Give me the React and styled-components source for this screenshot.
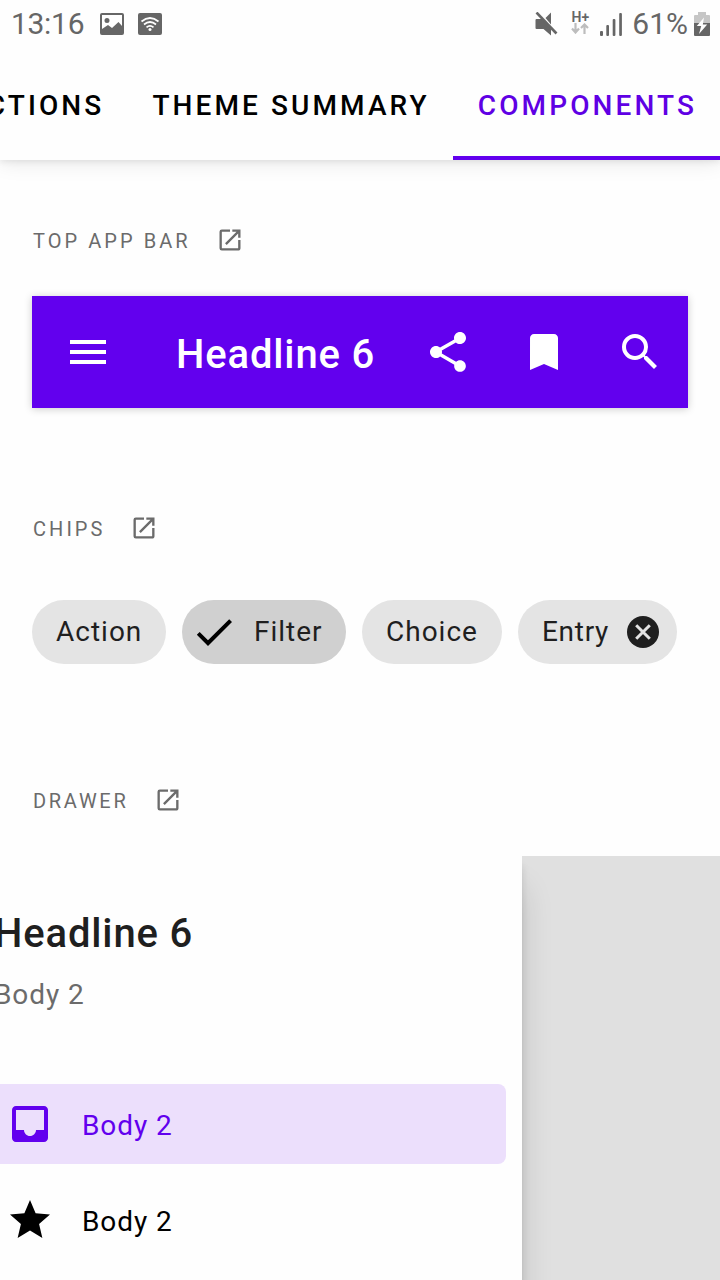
import React from "react";
import styled, { createGlobalStyle } from "styled-components";

const GlobalStyle = createGlobalStyle`
  *, *::before, *::after { box-sizing: border-box; }
  body { margin: 0; background: #fefefe; font-family: Roboto, sans-serif; }
`;

const Screen = styled.div`
  width: 720px;
  height: 1280px;
  overflow: hidden;
  display: flex;
  flex-direction: column;
  background: #fefefe;
`;

const StatusBar = styled.header`
  height: 48px;
  flex: none;
  display: flex;
  align-items: center;
  justify-content: space-between;
  padding: 0 10px 0 11px;
  color: #666;
`;

const StatusGroup = styled.div`
  display: flex;
  align-items: center;
  gap: ${(p) => p.$gap}px;
`;

const StatusText = styled.span`
  font-size: 30px;
  line-height: 48px;
  letter-spacing: ${(p) => p.$spacing || 0}px;
`;

const Glyph = styled.svg`
  display: block;
  flex: none;
  fill: currentColor;
  width: ${(p) => p.$w}px;
  height: ${(p) => p.$h || p.$w}px;
`;

const TabBar = styled.nav`
  height: 112px;
  flex: none;
  display: flex;
  justify-content: flex-end;
  box-shadow: 0 2px 20px rgba(0, 0, 0, 0.1), 0 2px 6px rgba(0, 0, 0, 0.07);
  clip-path: inset(0 0 -30px 0);
`;

const Tab = styled.div`
  flex: none;
  padding: 38px 23px 0 25px;
  border-bottom: 4px solid ${(p) => (p.$active ? "#6200ee" : "transparent")};
  color: ${(p) => (p.$active ? "#5f00e4" : "#000")};
  font-size: 28px;
  line-height: 40px;
  font-weight: 500;
  letter-spacing: 3.1px;
  white-space: nowrap;
`;

const Section = styled.section`
  flex: none;
  padding: ${(p) => p.$top}px 32px 0;
`;

const SectionLabel = styled.h2`
  margin: 0 0 ${(p) => p.$after}px;
  height: 32px;
  display: flex;
  align-items: center;
  gap: ${(p) => p.$gap}px;
  padding-left: 1px;
  color: #6b6b6b;
  font-size: 20px;
  line-height: 32px;
  font-weight: 400;
  letter-spacing: ${(p) => p.$spacing}px;
  span { padding-top: 2px; }
`;

const AppBar = styled.div`
  height: 112px;
  display: flex;
  align-items: center;
  padding: 0 24px 0 32px;
  background: #6200ee;
  color: #fff;
  box-shadow: 0 1px 8px rgba(0, 0, 0, 0.2);
`;

const AppBarTitle = styled.div`
  flex: 1;
  padding: 6px 0 0 64px;
  font-size: 40px;
  line-height: 48px;
  font-weight: 500;
  letter-spacing: 0.85px;
  white-space: nowrap;
`;

const Actions = styled.div`
  display: flex;
  gap: 48px;
`;

const Chips = styled.div`
  display: flex;
  gap: 16px;
`;

const Chip = styled.div`
  height: 64px;
  flex: none;
  display: flex;
  align-items: center;
  justify-content: space-between;
  width: ${(p) => p.$w}px;
  padding: 0 ${(p) => (p.$closable ? 18 : p.$selected ? 23.5 : 23)}px 0 ${(p) => (p.$selected ? 8 : 24)}px;
  border-radius: 32px;
  background: ${(p) => (p.$selected ? "#d0d0d0" : "#e4e4e4")};
  color: #1f1f1f;
  font-size: 28px;
  line-height: 40px;
  letter-spacing: ${(p) => (p.$closable ? 0.7 : 1)}px;
  white-space: nowrap;
`;

const CheckGlyph = styled(Glyph)`
  color: #000;
`;

const DrawerStage = styled.div`
  flex: 1;
  margin-top: 40px;
  overflow: hidden;
  background: #e0e0e0;
`;

const Drawer = styled.aside`
  width: 560px;
  height: 100%;
  margin-left: -38px;
  padding: 48px 16px 0;
  background: #fefefe;
  box-shadow: 0 32px 30px rgba(0, 0, 0, 0.14), 0 10px 8px rgba(0, 0, 0, 0.12);
`;

const DrawerTitle = styled.div`
  padding: 6px 16px 0;
  font-size: 40px;
  line-height: 48px;
  font-weight: 500;
  letter-spacing: 0.85px;
  color: #1f1f1f;
`;

const DrawerSubtitle = styled.div`
  padding: 17px 16px 0;
  margin-bottom: 69px;
  font-size: 28px;
  line-height: 40px;
  letter-spacing: 0.9px;
  color: #6b6b6b;
`;

const DrawerItem = styled.div`
  height: 80px;
  margin-bottom: 16px;
  display: flex;
  align-items: center;
  gap: 28px;
  padding: 0 28px;
  border-radius: 8px;
  background: ${(p) => (p.$active ? "#ecdffc" : "transparent")};
  color: ${(p) => (p.$active ? "#6200ee" : "#000")};
  font-size: 28px;
  line-height: 40px;
  letter-spacing: 0.9px;
  span { padding-top: 4px; }
`;

const Icon = ({ d, size = 48 }) => (
  <Glyph $w={size} viewBox="0 0 24 24">
    <path d={d} />
  </Glyph>
);

const paths = {
  menu: "M3 18h18v-2H3v2zm0-5h18v-2H3v2zm0-7v2h18V6H3z",
  share:
    "M18 16.08c-.76 0-1.44.3-1.96.77L8.91 12.7c.05-.23.09-.46.09-.7s-.04-.47-.09-.7l7.05-4.11c.54.5 1.25.81 2.04.81 1.66 0 3-1.34 3-3s-1.34-3-3-3-3 1.34-3 3c0 .24.04.47.09.7L8.04 9.81C7.5 9.31 6.79 9 6 9c-1.66 0-3 1.34-3 3s1.34 3 3 3c.79 0 1.5-.31 2.04-.81l7.12 4.16c-.05.21-.08.43-.08.65 0 1.61 1.31 2.92 2.92 2.92s2.92-1.31 2.92-2.92-1.31-2.92-2.92-2.92z",
  bookmark: "M17 3H7c-1.1 0-1.99.9-1.99 2L5 21l7-3 7 3V5c0-1.1-.9-2-2-2z",
  search:
    "M15.5 14h-.79l-.28-.27A6.471 6.471 0 0 0 16 9.5 6.5 6.5 0 1 0 9.5 16c1.61 0 3.09-.59 4.23-1.57l.27.28v.79l5 4.99L20.49 19l-4.99-5zm-6 0C7.01 14 5 11.99 5 9.5S7.01 5 9.5 5 14 7.01 14 9.5 11.99 14 9.5 14z",
  open: "M19 19H5V5h7V3H5a2 2 0 0 0-2 2v14a2 2 0 0 0 2 2h14c1.1 0 2-.9 2-2v-7h-2v7zM14 3v2h3.59l-9.83 9.83 1.41 1.41L19 6.41V10h2V3h-7z",
  check: "M9 16.17 4.83 12l-1.42 1.41L9 19 21 7l-1.41-1.41z",
  inbox:
    "M19 3H4.99c-1.11 0-1.98.89-1.98 2L3 19c0 1.1.88 2 1.99 2H19c1.1 0 2-.9 2-2V5c0-1.11-.9-2-2-2zm0 12h-4c0 1.66-1.35 3-3 3s-3-1.34-3-3H4.99V5H19v10z",
  star: "M12 17.27 18.18 21l-1.64-7.03L22 9.24l-7.19-.61L12 2 9.19 8.63 2 9.24l5.46 4.73L5.82 21z",
};

const Label = ({ children, after, spacing = 3.05, gap = 25 }) => (
  <SectionLabel $after={after} $spacing={spacing} $gap={gap}>
    <span>{children}</span>
    <Icon d={paths.open} size={28} />
  </SectionLabel>
);

const PictureIcon = () => (
  <Glyph $w={24} $h={22} viewBox="0 0 24 22">
    <path
      fillRule="evenodd"
      d="M2 0h20a2 2 0 0 1 2 2v18a2 2 0 0 1-2 2H2a2 2 0 0 1-2-2V2a2 2 0 0 1 2-2zm0 2v14l6-4 4 3 6.500-6 3.500 4V2zM7 5a2.500 2.500 0 1 1 0 5 2.500 2.500 0 0 1 0-5z"
    />
  </Glyph>
);

const WifiIcon = () => (
  <Glyph $w={24} $h={22} viewBox="0 0 24 22">
    <rect width="24" height="22" rx="2" />
    <g fill="none" stroke="#fefefe" strokeWidth="1.700">
      <path d="M3.500 8.500Q12 1.500 20.500 8.500M6 11.500Q12 6.500 18 11.500M8.500 14.300Q12 11.300 15.500 14.300" />
    </g>
    <circle cx="12" cy="16.500" r="1.500" fill="#fefefe" />
  </Glyph>
);

const MuteIcon = () => (
  <Glyph $w={24} $h={25} viewBox="0 0 24 25">
    <path d="M10.500 6 16 0.500v12z" />
    <path d="M0.500 8Q0.500 7 1.500 7H7L16 16.500V23.500L8.500 17H1.500Q0.500 17 0.500 16z" />
    <path d="M1.500 0.500 21.500 21.500" fill="none" stroke="currentColor" strokeWidth="2.600" />
  </Glyph>
);

const NetworkBadge = styled.div`
  display: flex;
  flex-direction: column;
  align-items: center;
  font-size: 14px;
  line-height: 12px;
  font-weight: 600;
  margin: -3px 0 0 1px;
`;

const ArrowsIcon = () => (
  <Glyph $w={18} $h={11} viewBox="0 0 18 11">
    <path
      d="M4.500 0v9M1 5.500 4.500 9.500 8 5.500M13.500 11V1.500M10 5 13.500 1.500 17 5"
      fill="none"
      stroke="#bdbdbd"
      strokeWidth="2.200"
    />
  </Glyph>
);

const SignalIcon = () => (
  <Glyph $w={22} $h={23} viewBox="0 0 22 23">
    <rect x="0" y="18" width="3" height="5" rx="1" />
    <rect x="6.300" y="12" width="2.700" height="11" rx="1" />
    <rect x="12.700" y="6" width="2.700" height="17" rx="1" />
    <rect x="19.200" y="0" width="2.700" height="23" rx="1" />
  </Glyph>
);

const BatteryIcon = () => (
  <Glyph $w={16} $h={24} viewBox="0 0 16 24">
    <path d="M4 0h8v3h3a1 1 0 0 1 1 1v7H0V4a1 1 0 0 1 1-1h3z" fill="#c6c6c6" />
    <path d="M0 11h16v12a1 1 0 0 1-1 1H1a1 1 0 0 1-1-1z" />
    <path d="M10 5.500 2.800 14h4.400L5 22 13.200 12.500H8.800z" fill="#fefefe" />
  </Glyph>
);

const CancelIcon = () => (
  <Glyph $w={32} viewBox="0 0 32 32">
    <circle cx="16" cy="16" r="16" />
    <path d="m9.200 9.200 13.600 13.600M22.800 9.200 9.200 22.800" stroke="#e4e4e4" strokeWidth="3" />
  </Glyph>
);

export default function App() {
  return (
    <Screen>
      <GlobalStyle />
      <StatusBar>
        <StatusGroup $gap={16}>
          <StatusText $spacing={-0.3}>13:16</StatusText>
          <StatusGroup $gap={14}>
            <PictureIcon />
            <WifiIcon />
          </StatusGroup>
        </StatusGroup>
        <StatusGroup $gap={11}>
          <MuteIcon />
          <StatusGroup $gap={11}>
            <NetworkBadge>
              H+
              <ArrowsIcon />
            </NetworkBadge>
            <StatusGroup $gap={10}>
              <SignalIcon />
              <StatusGroup $gap={6}>
                <StatusText>61%</StatusText>
                <BatteryIcon />
              </StatusGroup>
            </StatusGroup>
          </StatusGroup>
        </StatusGroup>
      </StatusBar>
      <TabBar>
        <Tab>INSTRUCTIONS</Tab>
        <Tab>THEME SUMMARY</Tab>
        <Tab $active>COMPONENTS</Tab>
      </TabBar>

      <Section $top={64}>
        <Label after={40}>TOP APP BAR</Label>
        <AppBar>
          <Icon d={paths.menu} />
          <AppBarTitle>Headline 6</AppBarTitle>
          <Actions>
            <Icon d={paths.share} />
            <Icon d={paths.bookmark} />
            <Icon d={paths.search} />
          </Actions>
        </AppBar>
      </Section>

      <Section $top={104}>
        <Label after={56}>CHIPS</Label>
        <Chips>
          <Chip $w={134}>
            <span>Action</span>
          </Chip>
          <Chip $w={164} $selected>
            <CheckGlyph $w={48} viewBox="0 0 24 24">
              <path d={paths.check} />
            </CheckGlyph>
            <span>Filter</span>
          </Chip>
          <Chip $w={140}>
            <span>Choice</span>
          </Chip>
          <Chip $w={159} $closable>
            <span>Entry</span>
            <CancelIcon />
          </Chip>
        </Chips>
      </Section>

      <Section $top={120}>
        <Label after={0} spacing={2.7} gap={26}>DRAWER</Label>
      </Section>
      <DrawerStage>
        <Drawer>
          <DrawerTitle>Headline 6</DrawerTitle>
          <DrawerSubtitle>Body 2</DrawerSubtitle>
          <DrawerItem $active>
            <Icon d={paths.inbox} />
            <span>Body 2</span>
          </DrawerItem>
          <DrawerItem>
            <Icon d={paths.star} />
            <span>Body 2</span>
          </DrawerItem>
        </Drawer>
      </DrawerStage>
    </Screen>
  );
}
